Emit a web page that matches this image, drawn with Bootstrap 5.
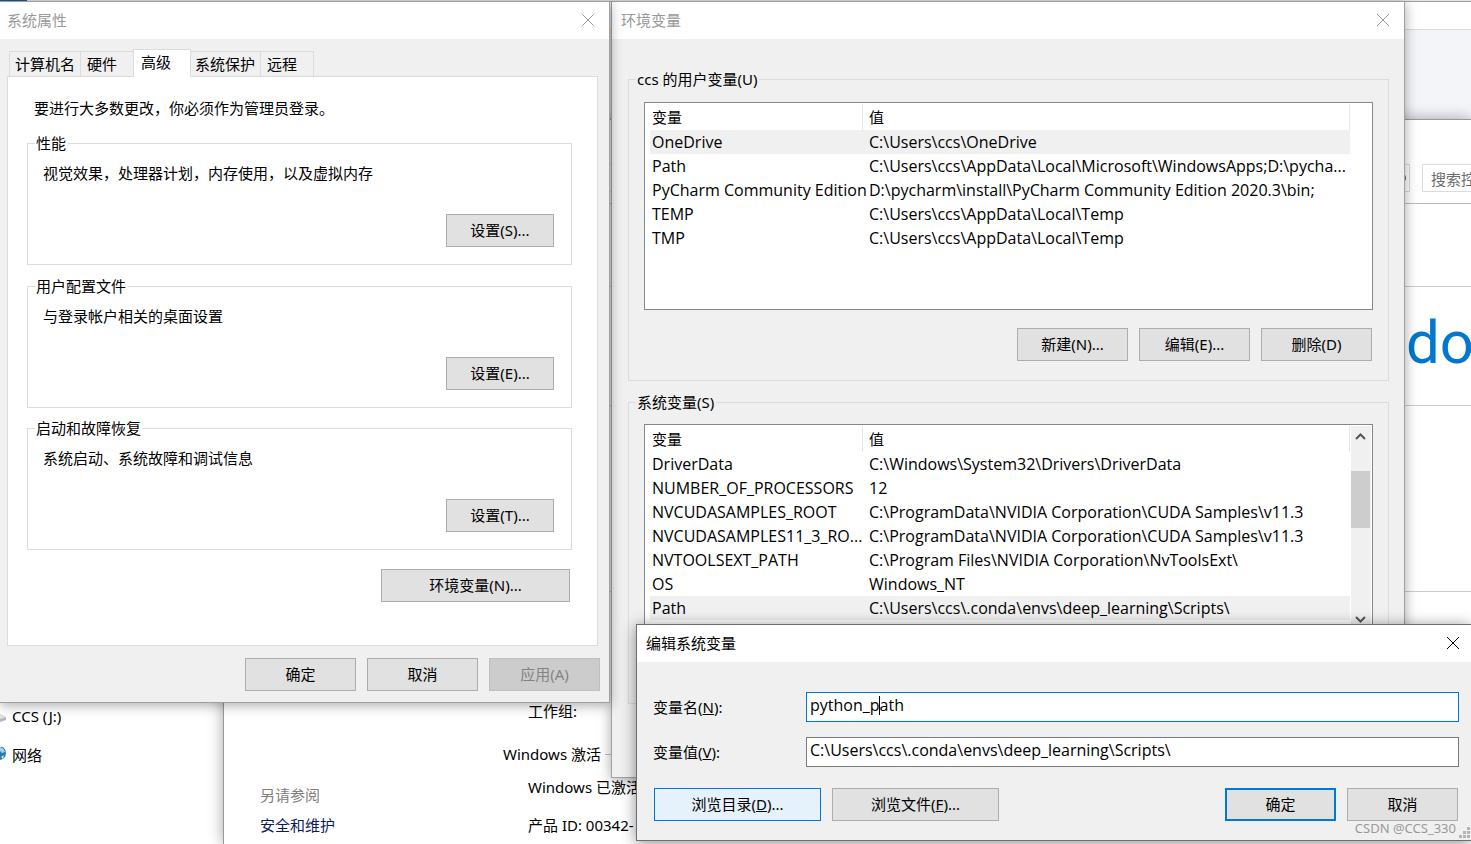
<!DOCTYPE html>
<html lang="zh-CN">
<head>
<meta charset="utf-8">
<meta name="viewport" content="width=device-width, initial-scale=1">
<title>环境变量</title>
<link href="https://cdn.jsdelivr.net/npm/bootstrap@5.3.0/dist/css/bootstrap.min.css" rel="stylesheet">
<style>
  body { font-family: "Noto Sans", "Noto Sans CJK SC", sans-serif; font-size: 15px; line-height: 22px; color: #000; background: #fff; }
  .desktop { height: 100vh; min-height: 600px; }

  /* windows on the desktop */
  .win { position: absolute; background: #f0f0f0; border: 1px solid #a0a0a0; box-shadow: 0 2px 12px rgba(0,0,0,.35); }
  .win-title { height: 37px; padding-left: 7px; background: #fff; color: #999; }
  .win-name { padding-top: 7px; }
  .win-active { border-color: #6e6e6e; box-shadow: 0 2px 14px rgba(0,0,0,.45); }
  .win-active .win-title { color: #000; }
  .win-x { width: 43px; height: 36px; padding: 0; border: 0; background: none; color: inherit; line-height: 0; }
  .win-props { top: 1px; left: 0; right: 861px; border-left: 0; }
  .win-env { top: 1px; left: 611px; right: 66px; }
  .win-edit { top: 624px; left: 636px; right: 0; border-right: 0; }
  .win-env .win-title, .win-edit .win-title { padding-left: 9px; }
  .win-edit .win-x { width: 36px; }

  .btn-win { height: 33px; width: 111px; padding: 0 0 2px; border: 1px solid #adadad; border-radius: 0; background: #e1e1e1; color: #000; font-size: 15px; line-height: 22px; }
  .btn-win:disabled { background: #ccc; border-color: #bfbfbf; color: #838383; opacity: 1; }
  .btn-set { width: 108px; }
  .btn-envs { width: 189px; }
  .btn-browse { width: 167px; }
  .btn-hot { background: #e5f1fb; border-color: #0078d7; }
  .btn-default { border: 2px solid #0078d7; }
  .btn-row { gap: 11px; }

  /* property sheet */
  .props-body { padding: 10px 11px 11px 7px; }
  .props-foot { padding-top: 12px; margin-right: -2px; }
  .sheet-tabs { height: 27px; padding-left: 2px; }
  .sheet-tab { height: 25px; padding: 0 5px; border: 1px solid #dcdcdc; border-bottom: 0; border-left: 0; background: #f0f0f0; color: #000; text-align: left; line-height: 22px; }
  .sheet-tab:first-child { border-left: 1px solid #dcdcdc; width: 72px; }
  .sheet-tab.active { position: relative; width: 58px; height: 28px; margin: 0 0 -1px -1px; padding: 0 7px 3px; border-left: 1px solid #dcdcdc; background: #fff; }
  .tab-short { width: 53px; padding-left: 6px; }
  .tab-long { width: 70px; padding-left: 4px; }
  .sheet { border: 1px solid #dcdcdc; background: #fff; padding: 20px 25px 43px 19px; }
  .sheet-note { padding: 0 0 13px 7px; }
  .sheet-action { padding: 10px 2px 0 0; }

  .group { border: 1px solid #dcdcdc; padding: 0 17px 0 15px; }
  .group legend { float: none; width: auto; height: 22px; margin: 0 0 0 -8px; padding: 0 2px 0 1px; font-size: 15px; line-height: 22px; }
  .group-props { height: 133px; margin-bottom: 9px; }
  .group-props:first-of-type { margin-bottom: 10px; }
  .group-text { padding: 8px 0 30px; }
  .group-vars { padding-right: 15px; }

  /* variable lists */
  .env-body { padding: 29px 15px 73px 16px; }
  .vars-user { padding-bottom: 19px; margin-bottom: 10px; }
  .vars-system { padding-bottom: 71px; }
  .vars-buttons { padding: 18px 1px 0 0; }
  .varbox { height: 208px; margin-top: 11px; border: 1px solid #828790; background: #fff; padding: 1px 1px 1px 5px; }
  .vars-user .varbox { margin-top: 12px; }
  .vars { width: 100%; table-layout: fixed; border-collapse: separate; border-spacing: 0; }
  .vars col:first-child { width: 213px; }
  .vars th { height: 26px; padding: 0 0 0 2px; border-right: 1px solid #e5e5e5; font-weight: 400; }
  .vars td { height: 24px; padding: 0 0 0 2px; font-family: "Open Sans", "Noto Sans CJK SC", sans-serif; font-size: 16px; line-height: 24px; white-space: nowrap; }
  .vars th + th, .vars td + td { padding-left: 6px; }
  .vars .picked td { background: #f0f0f0; }
  .gutter { flex: 0 0 21px; }
  .scroller { background: #f0f0f0; margin-left: 1px; flex-basis: 20px; }
  .thumb { height: 57px; margin-top: 24px; background: #cdcdcd; width: 19px; }

  /* edit dialog */
  .edit-body { padding: 30px 12px 19px 16px; }
  .edit-row { margin-bottom: 15px; }
  .edit-foot { padding: 6px 1px 0; }
  .field { height: 30px; padding: 0 3px 4px; border: 1px solid #7a7a7a; border-radius: 0; background: #fff; color: #000; font-family: "Open Sans", "Noto Sans CJK SC", sans-serif; font-size: 16px; line-height: 22px; }
  .field.live { border-color: #0078d7; }
  .field-label { width: 153px; }
  .caret { position: absolute; left: 73px; top: 4px; width: 1px; height: 19px; background: #000; }
  .stamp { position: absolute; right: 15px; bottom: 3px; font-size: 13px; line-height: 18px; color: #999; }
  .grip { position: absolute; right: 0; bottom: 1px; }

  /* windows behind */
  .strip { height: 2px; background: #e4e4e4; border-bottom: 1px solid #a0a0a0; }
  .strip-accent { width: 27px; height: 2px; background: #0a5aa0; }
  .browser { background: #f3f5f9; }
  .browser-line { height: 28px; border-bottom: 1px solid #dcdcdc; }
  .explorer { position: absolute; left: 0; bottom: 0; width: 223px; height: 143px; padding-top: 4px; background: #fff; }
  .tree-item { gap: 5px; margin-bottom: 17px; }
  .panel { position: absolute; top: 119px; left: 223px; right: 0; bottom: 0; background: #fff; border: 1px solid #999; border-right: 0; border-bottom: 0; box-shadow: 0 0 14px rgba(0,0,0,.35); }
  .address { gap: 12px; padding-top: 44px; height: 84px; border-bottom: 1px solid #bbb; }
  .addr-box { height: 28px; border: 1px solid #dcdcdc; }
  .search-box { width: 49px; height: 28px; padding: 0 0 0 8px; border: 1px solid #dcdcdc; border-right: 0; border-radius: 0; color: #6d6d6d; }
  .sec { border-bottom: 1px solid #ccc; margin-left: 280px; }
  .sec-a { height: 83px; } .sec-b { height: 119px; } .sec-c { height: 186px; }
  .brand { width: 65px; font-family: Roboto, sans-serif; font-size: 60px; line-height: 111px; color: #0078cf; overflow: hidden; white-space: nowrap; }
  .see-also { position: absolute; left: 36px; bottom: 8px; }
  .see-also a { color: #0b1a5c; text-decoration: none; }
  .see-head { color: #808080; padding-bottom: 8px; }
  .sysinfo { margin-left: 279px; padding-top: 108px; }
  .info-item { padding-left: 25px; }
  .info-head { gap: 4px; padding: 21px 0 11px; }
  .info-last { padding-top: 16px; }
</style>
</head>
<body>
<div class="desktop position-relative overflow-hidden browser">
  <div class="strip"><div class="strip-accent"></div></div>
  <div class="browser-line bg-white"></div>

  <div class="explorer">
    <div class="tree-item d-flex align-items-center">
      <svg width="7" height="16" viewBox="0 0 7 16"><path d="M0 6l6 3v3l-6 2z" fill="#b8b8bc"/><path d="M0 6l6 3-6 2z" fill="#e2e2e4"/></svg>
      <span>CCS (J:)</span>
    </div>
    <div class="tree-item d-flex align-items-center">
      <svg width="7" height="16" viewBox="0 0 7 16"><circle cx="-1" cy="6" r="7" fill="#2b7ba6"/><path d="M0 0q4 1 5 5l-3 1-2-2z" fill="#9fd0e4"/><path d="M1 10l3-2-1 4z" fill="#cfe8f0"/></svg>
      <span>网络</span>
    </div>
  </div>

  <section class="panel">
    <div class="address d-flex">
      <div class="addr-box flex-grow-1 d-flex justify-content-end align-items-center ms-5">
        <svg width="8" height="16" viewBox="0 0 8 16" fill="none" stroke="#666" stroke-width="2"><path d="M-1 3a5 5 0 0 1 0 10"/></svg>
      </div>
      <input class="search-box" type="text" aria-label="搜索" value="搜索控">
    </div>
    <div class="sec sec-a"></div>
    <div class="sec sec-b d-flex justify-content-end"><div class="brand">do</div></div>
    <div class="sec sec-c"></div>
    <div class="sysinfo">
      <div class="info-item">工作组:</div>
      <div class="info-head d-flex align-items-center"><span>Windows 激活</span><hr class="flex-grow-1 m-0"></div>
      <div class="info-item">Windows 已激活</div>
      <div class="info-item info-last">产品 ID: 00342-</div>
    </div>
    <div class="see-also">
      <div class="see-head">另请参阅</div>
      <a href="#">安全和维护</a>
    </div>
  </section>

  <section class="win win-env">
    <div class="win-title d-flex justify-content-between">
      <div class="win-name">环境变量</div>
      <button class="win-x" type="button" aria-label="关闭"><svg width="14" height="14" viewBox="0 0 14 14" stroke="currentColor" fill="none"><path d="M1 1l12 12M13 1L1 13"/></svg></button>
    </div>
    <div class="env-body">
      <fieldset class="group group-vars vars-user">
        <legend>ccs 的用户变量(U)</legend>
        <div class="varbox d-flex">
          <table class="vars align-self-start"><colgroup><col><col></colgroup>
            <thead><tr><th>变量</th><th>值</th></tr></thead>
            <tbody>
              <tr class="picked"><td>OneDrive</td><td>C:\Users\ccs\OneDrive</td></tr>
              <tr><td>Path</td><td>C:\Users\ccs\AppData\Local\Microsoft\WindowsApps;D:\pycha...</td></tr>
              <tr><td>PyCharm Community Edition</td><td>D:\pycharm\install\PyCharm Community Edition 2020.3\bin;</td></tr>
              <tr><td>TEMP</td><td>C:\Users\ccs\AppData\Local\Temp</td></tr>
              <tr><td>TMP</td><td>C:\Users\ccs\AppData\Local\Temp</td></tr>
            </tbody>
          </table>
          <div class="gutter"></div>
        </div>
        <div class="vars-buttons btn-row d-flex justify-content-end">
          <button class="btn btn-win" type="button">新建(N)...</button>
          <button class="btn btn-win" type="button">编辑(E)...</button>
          <button class="btn btn-win" type="button">删除(D)</button>
        </div>
      </fieldset>
      <fieldset class="group group-vars vars-system">
        <legend>系统变量(S)</legend>
        <div class="varbox d-flex">
          <table class="vars align-self-start"><colgroup><col><col></colgroup>
            <thead><tr><th>变量</th><th>值</th></tr></thead>
            <tbody>
              <tr><td>DriverData</td><td>C:\Windows\System32\Drivers\DriverData</td></tr>
              <tr><td>NUMBER_OF_PROCESSORS</td><td>12</td></tr>
              <tr><td>NVCUDASAMPLES_ROOT</td><td>C:\ProgramData\NVIDIA Corporation\CUDA Samples\v11.3</td></tr>
              <tr><td>NVCUDASAMPLES11_3_RO...</td><td>C:\ProgramData\NVIDIA Corporation\CUDA Samples\v11.3</td></tr>
              <tr><td>NVTOOLSEXT_PATH</td><td>C:\Program Files\NVIDIA Corporation\NvToolsExt\</td></tr>
              <tr><td>OS</td><td>Windows_NT</td></tr>
              <tr class="picked"><td>Path</td><td>C:\Users\ccs\.conda\envs\deep_learning\Scripts\</td></tr>
            </tbody>
          </table>
          <div class="gutter scroller d-flex flex-column">
            <svg width="19" height="21" viewBox="0 0 19 21" fill="none" stroke="#555" stroke-width="2"><path d="M5 13l4.500-4.500L14 13"/></svg>
            <div class="thumb"></div>
            <svg class="mt-auto" width="19" height="24" viewBox="0 0 19 24" fill="none" stroke="#555" stroke-width="2"><path d="M5 11l4.500 4.500L14 11"/></svg>
          </div>
        </div>
      </fieldset>
    </div>
  </section>

  <section class="win win-props">
    <div class="win-title d-flex justify-content-between">
      <div class="win-name">系统属性</div>
      <button class="win-x" type="button" aria-label="关闭"><svg width="14" height="14" viewBox="0 0 14 14" stroke="currentColor" fill="none"><path d="M1 1l12 12M13 1L1 13"/></svg></button>
    </div>
    <div class="props-body">
      <div class="sheet-tabs d-flex align-items-end" role="tablist">
        <button class="sheet-tab" type="button" role="tab">计算机名</button>
        <button class="sheet-tab tab-short" type="button" role="tab">硬件</button>
        <button class="sheet-tab active" type="button" role="tab" aria-selected="true">高级</button>
        <button class="sheet-tab tab-long" type="button" role="tab">系统保护</button>
        <button class="sheet-tab tab-short" type="button" role="tab">远程</button>
      </div>
      <div class="sheet">
        <div class="sheet-note">要进行大多数更改，你必须作为管理员登录。</div>
        <fieldset class="group group-props">
          <legend>性能</legend>
          <div class="group-text">视觉效果，处理器计划，内存使用，以及虚拟内存</div>
          <div class="text-end"><button class="btn btn-win btn-set" type="button">设置(S)...</button></div>
        </fieldset>
        <fieldset class="group group-props">
          <legend>用户配置文件</legend>
          <div class="group-text">与登录帐户相关的桌面设置</div>
          <div class="text-end"><button class="btn btn-win btn-set" type="button">设置(E)...</button></div>
        </fieldset>
        <fieldset class="group group-props">
          <legend>启动和故障恢复</legend>
          <div class="group-text">系统启动、系统故障和调试信息</div>
          <div class="text-end"><button class="btn btn-win btn-set" type="button">设置(T)...</button></div>
        </fieldset>
        <div class="sheet-action text-end"><button class="btn btn-win btn-envs" type="button">环境变量(N)...</button></div>
      </div>
      <div class="props-foot btn-row d-flex justify-content-end">
        <button class="btn btn-win" type="button">确定</button>
        <button class="btn btn-win" type="button">取消</button>
        <button class="btn btn-win" type="button" disabled>应用(A)</button>
      </div>
    </div>
  </section>

  <section class="win win-active win-edit">
    <div class="win-title d-flex justify-content-between">
      <div class="win-name">编辑系统变量</div>
      <button class="win-x" type="button" aria-label="关闭"><svg width="14" height="14" viewBox="0 0 14 14" stroke="currentColor" fill="none"><path d="M1 1l12 12M13 1L1 13"/></svg></button>
    </div>
    <form class="edit-body">
      <div class="edit-row d-flex align-items-center">
        <label class="field-label flex-shrink-0" for="vname">变量名(<u>N</u>):</label>
        <div class="position-relative flex-grow-1 d-flex"><input id="vname" class="field live w-100" type="text" value="python_path"><span class="caret"></span></div>
      </div>
      <div class="edit-row d-flex align-items-center">
        <label class="field-label flex-shrink-0" for="vval">变量值(<u>V</u>):</label>
        <input id="vval" class="field flex-grow-1" type="text" value="C:\Users\ccs\.conda\envs\deep_learning\Scripts\">
      </div>
      <div class="edit-foot btn-row d-flex">
        <button class="btn btn-win btn-browse btn-hot" type="button">浏览目录(<u>D</u>)...</button>
        <button class="btn btn-win btn-browse" type="button">浏览文件(<u>F</u>)...</button>
        <button class="btn btn-win btn-default ms-auto" type="button">确定</button>
        <button class="btn btn-win" type="button">取消</button>
      </div>
    </form>
    <span class="stamp">CSDN @CCS_330</span>
    <svg class="grip" width="12" height="12" viewBox="0 0 12 12" fill="#b5b5b5"><path d="M8 0h3v3H8zM4 4h3v3H4zM8 4h3v3H8zM0 8h3v3H0zM4 8h3v3H4zM8 8h3v3H8z"/></svg>
  </section>
</div>
<script src="https://cdn.jsdelivr.net/npm/bootstrap@5.3.0/dist/js/bootstrap.bundle.min.js"></script>
</body>
</html>
